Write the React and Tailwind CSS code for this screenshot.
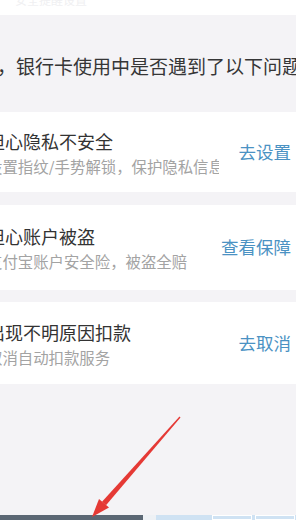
import React from 'react';

const cards = [
  { title: '担心隐私不安全', sub: '设置指纹/手势解锁，保护隐私信息', action: '去设置', h: 'h-[80px]', gap: '' },
  { title: '担心账户被盗', sub: '支付宝账户安全险，被盗全赔', action: '查看保障', h: 'h-[85px]', gap: 'mt-[13px]' },
  { title: '出现不明原因扣款', sub: '取消自动扣款服务', action: '去取消', h: 'h-[82px]', gap: 'mt-[12px]' },
];

export default function App() {
  return (
    <div
      className="relative w-[296px] h-[520px] overflow-hidden bg-[#f4f3f6] flex flex-col"
      style={{ fontFamily: '"Noto Sans CJK SC", "Noto Sans", sans-serif' }}
    >
      {/* top white strip, cut off */}
      <div className="h-[15px] bg-white relative overflow-hidden shrink-0">
        <div className="absolute left-[15px] -top-[9px] text-[12px] text-[#f0f0f2] whitespace-nowrap">安全提醒设置</div>
      </div>

      {/* heading */}
      <div className="h-[97px] flex items-center pt-[3px] shrink-0 whitespace-nowrap">
        <span className="ml-[-3px] text-[19px] leading-none text-[#363636]">，银行卡使用中是否遇到了以下问题</span>
      </div>

      {/* cards */}
      <div className="flex flex-col shrink-0">
        {cards.map((c, i) => (
          <div key={i} className={`${c.h} ${c.gap} bg-white flex items-center justify-between`}>
            <div className="ml-[-13px] w-[232px] overflow-hidden whitespace-nowrap flex flex-col">
              <span className="text-[18px] leading-[22px] text-[#333333]">{c.title}</span>
              <span className="mt-[5px] text-[15.4px] leading-[18px] text-[#a3a3a3]">{c.sub}</span>
            </div>
            <span className="pr-[5px] text-[17.5px] text-[#4b92c3] whitespace-nowrap">{c.action}</span>
          </div>
        ))}
      </div>

      <div className="flex-1" />

      {/* bottom bar, cut off */}
      <div className="h-[5px] flex shrink-0">
        <div className="w-[143px] bg-[#5b6774]" />
        <div className="w-[13px] bg-[#eef1f5]" />
        <div className="flex-1 bg-[#cfe2f3] flex gap-[3px] pl-[56px]">
          <div className="w-[40px] border border-white" />
          <div className="w-[40px] border border-white" />
        </div>
      </div>

      {/* red annotation arrow */}
      <svg className="absolute left-0 top-0 pointer-events-none" width="296" height="520" viewBox="0 0 296 520">
        <polygon points="179.5,416.6 180.5,417.4 106,505.2 102,501.8" fill="#e53935" />
        <polygon points="92,517 109,507.5 99,499" fill="#e53935" />
      </svg>
    </div>
  );
}
